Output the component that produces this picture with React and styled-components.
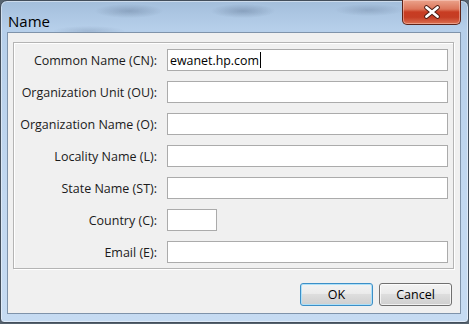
import React from 'react';
import styled, { createGlobalStyle } from 'styled-components';

const GlobalStyle = createGlobalStyle`
html, body {
  margin: 0;
  padding: 0;
  background: #56636f;
  width: 469px;
  height: 324px;
  overflow: hidden;
}
`

const Window = styled.div`
box-sizing: border-box;
width: 469px;
height: 323px;
display: flex;
flex-direction: column;
padding: 0 7px 8px 6px;
border: 1px solid #434e5b;
border-radius: 7px 7px 4px 4px;
background: linear-gradient(180deg, #a3bedb 0px, #b6cfea 28px, #c2d8f0 60%, #c6dbf2 100%);
box-shadow: inset 0 0 0 1px rgba(255, 255, 255, 0.45);
font-family: "Open Sans", "Noto Sans", sans-serif;
`

const TitleBar = styled.div`
height: 31px;
display: flex;
justify-content: space-between;
align-items: flex-start;
margin: 0 -7px 0 -6px;
padding: 0 7px 0 7px;
background:
  radial-gradient(ellipse 34px 7px at 128px 10px, rgba(60, 80, 110, 0.28), transparent),
  radial-gradient(ellipse 32px 7px at 242px 10px, rgba(60, 80, 110, 0.3), transparent),
  radial-gradient(ellipse 34px 6px at 368px 9px, rgba(60, 80, 110, 0.22), transparent),
  radial-gradient(ellipse 36px 5px at 88px 30px, rgba(60, 80, 110, 0.18), transparent);
border-radius: 6px 6px 0 0;
`

const Title = styled.span`
font-size: 15px;
line-height: 20px;
padding-top: 10px;
color: #000;
`

const CloseButton = styled.div`
box-sizing: border-box;
width: 59px;
height: 25px;
margin-top: -1px;
display: flex;
align-items: center;
justify-content: center;
border: 1px solid #5e2419;
border-top: none;
border-radius: 0 0 5px 5px;
background: linear-gradient(180deg, #eba38c 0%, #dc765b 38%, #c83c22 50%, #c53d24 72%, #dc7152 100%);
box-shadow: inset 0 0 0 1px rgba(255, 220, 210, 0.45);
`

const Client = styled.div`
flex: 1;
display: flex;
flex-direction: column;
padding: 9px 6px 7px 5px;
background: #f0f0f0;
border: 1px solid #7f93aa;
`

const Group = styled.div`
display: grid;
grid-template-columns: 144px 1fr;
grid-auto-rows: 22px;
column-gap: 9px;
row-gap: 10px;
padding: 6px 5px 5px 0;
border: 1px solid #b4b4b4;
box-shadow: inset 1px 1px 0 #ffffff, 1px 1px 0 #ffffff;
`

const Label = styled.label`
display: flex;
align-items: center;
justify-content: flex-end;
padding-right: 1px;
font-size: 12.5px;
color: #1b1b1b;
white-space: nowrap;
`

const Field = styled.div`
box-sizing: border-box;
height: 22px;
width: ${p => (p.$narrow ? '50px' : '100%')};
display: flex;
align-items: center;
padding-left: 2px;
background: #fff;
border: 1px solid #ababab;
font-size: 12.4px;
color: #000;
`

const Caret = styled.span`
display: inline-block;
width: 1px;
height: 16px;
margin-left: 1px;
background: #000;
`

const ButtonRow = styled.div`
display: flex;
justify-content: flex-end;
gap: 6px;
margin-top: 14px;
margin-right: 2px;
`

const Button = styled.button`
box-sizing: border-box;
width: 73px;
height: 23px;
padding: 0;
font-family: "Open Sans", "Noto Sans", sans-serif;
font-size: 12.5px;
color: #000;
border-radius: 3px;
border: 1px solid ${p => (p.$default ? '#3c8fc7' : '#707070')};
background: linear-gradient(180deg, #f3f3f3 0%, #ebebeb 45%, #dddddd 50%, #cfcfcf 100%);
box-shadow: inset 0 0 0 1px ${p => (p.$default ? '#aee0f8' : 'rgba(255,255,255,0.7)')};
`

const fields = [
  { label: 'Common Name (CN):', value: 'ewanet.hp.com', focused: true },
  { label: 'Organization Unit (OU):' },
  { label: 'Organization Name (O):' },
  { label: 'Locality Name (L):' },
  { label: 'State Name (ST):' },
  { label: 'Country (C):', narrow: true },
  { label: 'Email (E):' },
];

const CloseIcon = () => (
  <svg width="18" height="14" viewBox="0 0 18 14">
    <path d="M3.5 2.5 L14.5 11.5 M14.5 2.5 L3.5 11.5" stroke="#4a1a12" strokeWidth="4.6" strokeLinecap="round" />
    <path d="M3.5 2.5 L14.5 11.5 M14.5 2.5 L3.5 11.5" stroke="#ffffff" strokeWidth="2.8" strokeLinecap="round" />
  </svg>
);

const App = () => {
  return (
    <>
      <GlobalStyle />
      <Window>
        <TitleBar>
          <Title>Name</Title>
          <CloseButton>
            <CloseIcon />
          </CloseButton>
        </TitleBar>
        <Client>
          <Group>
            {fields.map(f => (
              <React.Fragment key={f.label}>
                <Label>{f.label}</Label>
                <Field $narrow={f.narrow}>
                  {f.value}
                  {f.focused && <Caret />}
                </Field>
              </React.Fragment>
            ))}
          </Group>
          <ButtonRow>
            <Button $default>OK</Button>
            <Button>Cancel</Button>
          </ButtonRow>
        </Client>
      </Window>
    </>
  );
};

export default App;
